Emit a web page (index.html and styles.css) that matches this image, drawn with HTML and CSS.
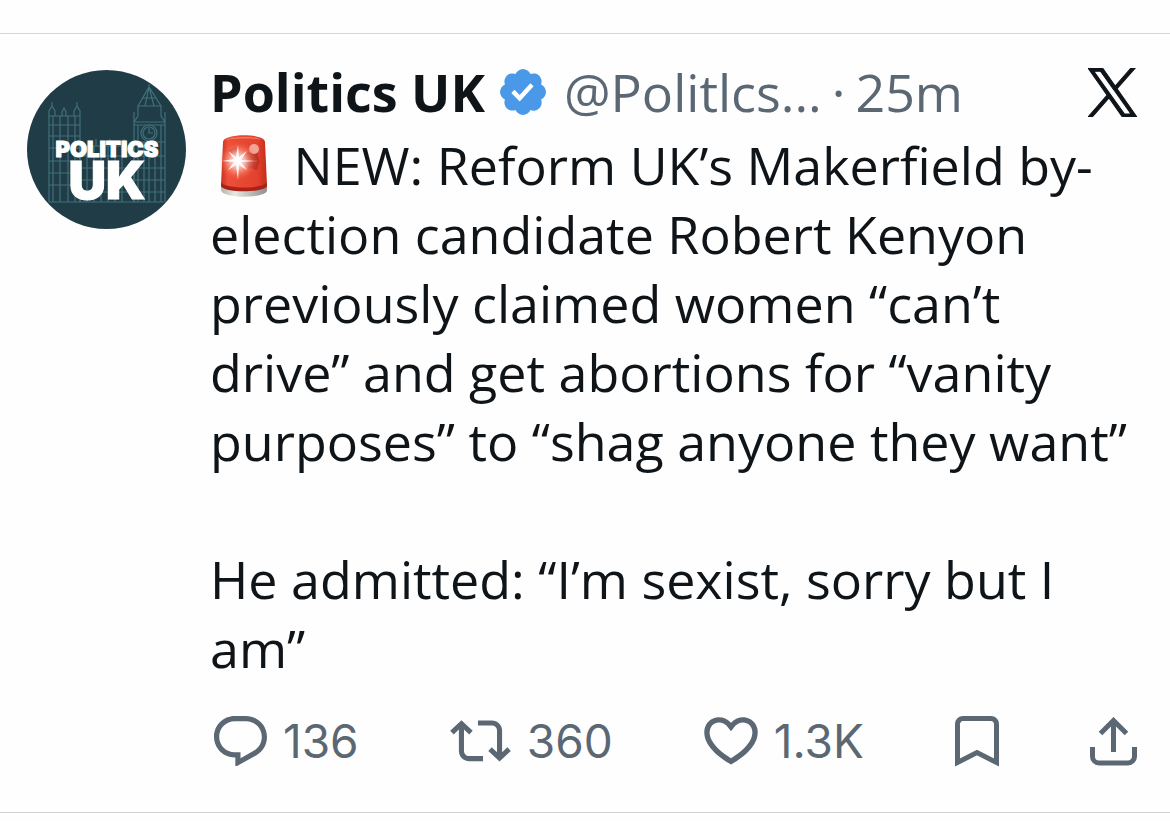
FILE: index.html
```html
<!DOCTYPE html>
<html lang="en">
<head>
    <meta charset="UTF-8">
    <meta name="viewport" content="width=device-width, initial-scale=1.0">
    <title>Politics UK on X</title>
    <link rel="stylesheet" href="styles.css">
</head>
<body>
    <article class="post">
        <a class="avatar" href="#" aria-label="Politics UK profile">
            <svg viewBox="0 0 159 159">
                <circle cx="79.5" cy="79.5" r="79.5" fill="#203d47"/>
                <g fill="none" stroke="#41707a" stroke-width="1.2">
                    <!-- west tower -->
                    <path d="M22 132V46h31v86M26 46v86M33 46v86M41 46v86M48 46v86M22 55h31M22 66h31M22 78h31M22 91h31M22 103h31M22 115h31M22 46v-5l3-5 3 5v5M47 46v-5l3-5 3 5v5M35 46v-4l2-4 2 4v4M25 36v-4M50 36v-4"/>
                    <!-- hall -->
                    <path d="M53 132V76h54v56M60 76v56M67 76v56M74 76v56M81 76v56M88 76v56M95 76v56M53 86h54M53 98h54M53 110h54M53 122h54M69 76v-7M83 76v-7M97 76v-7M22 132h115"/>
                    <!-- clock tower -->
                    <path d="M107 132V52h31v80M107 52l4-6V36h23v10l4 6M111 36l11-19 12 19M115 28h15M118 36l4-19 5 19M122 17v-3M107 42v10M138 42v10M107 55h31M107 72h31M111 55v77M134 55v77M117 72v60M122 72v60M128 72v60M107 86h31M107 98h31M107 110h31M107 122h31"/>
                    <circle cx="122" cy="63" r="8"/>
                    <circle cx="122" cy="63" r="6"/>
                    <path d="M122 58v5h4"/>
                </g>
                <text class="avatar-top" x="80" y="87">POLITICS</text>
                <text class="avatar-bottom" x="80" y="129">UK</text>
            </svg>
        </a>
        <div class="content">
            <header class="header">
                <a class="name" href="#">Politics UK</a>
                <svg class="verified" viewBox="1.6 1.6 18.8 18.8" role="img" aria-label="Verified account">
                    <path d="M20.396 11c-.018-.646-.215-1.275-.57-1.816-.354-.54-.852-.972-1.438-1.246.223-.607.27-1.264.14-1.897-.131-.634-.437-1.218-.882-1.687-.47-.445-1.053-.75-1.687-.882-.633-.13-1.29-.083-1.897.14-.273-.587-.704-1.086-1.245-1.44S11.647 1.62 11 1.604c-.646.017-1.273.213-1.813.568s-.969.854-1.24 1.44c-.608-.223-1.267-.272-1.902-.14-.635.13-1.22.436-1.69.882-.445.47-.749 1.055-.878 1.688-.13.633-.08 1.29.144 1.896-.587.274-1.087.705-1.443 1.245-.356.54-.555 1.17-.574 1.817.02.647.218 1.276.574 1.817.356.54.856.972 1.443 1.245-.224.606-.274 1.263-.144 1.896.13.634.433 1.218.877 1.688.47.443 1.054.747 1.687.878.633.132 1.29.084 1.897-.136.274.586.705 1.084 1.246 1.439.54.354 1.17.551 1.816.569.647-.016 1.276-.213 1.817-.567s.972-.854 1.245-1.44c.604.239 1.266.296 1.903.164.636-.132 1.22-.447 1.68-.907.46-.46.776-1.044.908-1.681s.075-1.299-.165-1.903c.586-.274 1.084-.705 1.439-1.246.354-.54.551-1.17.569-1.816zM9.662 14.85l-3.429-3.428 1.293-1.302 2.072 2.072 4.4-4.794 1.347 1.246z"/>
                </svg>
                <a class="handle" href="#">@Politlcs...</a>
                <span class="dot">·</span>
                <a class="time" href="#">25m</a>
                <a class="logo" href="#" aria-label="X">
                    <svg viewBox="0 0 24 24"><path d="M14.258 10.152L23.176 0h-2.113l-7.747 8.813L7.133 0H0l9.352 13.328L0 23.973h2.113l8.176-9.309 6.531 9.309h7.133zm-2.895 3.293l-.949-1.328L2.875 1.56h3.246l6.086 8.523.945 1.328 7.91 11.078h-3.246zm0 0"/></svg>
                </a>
            </header>
            <p class="text">
                <svg class="siren" viewBox="0 0 48 62" role="img" aria-label="Siren">
                    <defs>
                        <linearGradient id="glass" x1="0" x2="1" y1="0" y2="0">
                            <stop offset="0" stop-color="#c8301f"/>
                            <stop offset=".15" stop-color="#ee4f38"/>
                            <stop offset=".8" stop-color="#e2412c"/>
                            <stop offset="1" stop-color="#c22c1c"/>
                        </linearGradient>
                        <linearGradient id="base" x1="0" x2="1" y1="0" y2="0">
                            <stop offset="0" stop-color="#b5b3ae"/>
                            <stop offset=".3" stop-color="#e8e7e3"/>
                            <stop offset="1" stop-color="#8f8e8a"/>
                        </linearGradient>
                        <radialGradient id="glow">
                            <stop offset="0" stop-color="#fff"/>
                            <stop offset=".4" stop-color="#ffc9bd" stop-opacity=".8"/>
                            <stop offset="1" stop-color="#f0604a" stop-opacity="0"/>
                        </radialGradient>
                    </defs>
                    <path fill="url(#base)" d="M1 50c0-3 46-3 46 0v5c0 9-46 9-46 0z"/>
                    <path fill="url(#glass)" d="M3 7c0-9 42-9 42 0l2 43c-1 8-45 8-46 0z"/>
                    <path fill="#a92117" d="M1 48c8 6 38 6 46 0v3c-2 7-44 7-46 0z"/>
                    <path fill="#f47a60" d="M6 5c4-4 32-4 36 0-8-2-28-2-36 0z"/>
                    <path fill="#a52c22" d="M7 16l9-4 5 8-6 5zM24 18l13-2 3 12-11 6-4-8zM28 32l11-3-2 6z" opacity=".6"/>
                    <circle cx="34" cy="14" r="5" fill="#f3a398"/>
                    <circle cx="18" cy="26" r="19" fill="url(#glow)"/>
                    <path fill="#fff" d="M18 10l1 12 8-6-6 9 17 1-17 1 6 8-8-5-1 15-2-15-8 5 6-8-12-1 12-2-6-8 8 6z" opacity=".9"/>
                </svg>
                NEW: Reform UK’s Makerfield by-<br>
                election candidate Robert Kenyon<br>
                previously claimed women “can’t<br>
                drive” and get abortions for “vanity<br>
                purposes” to “shag anyone they want”
            </p>
            <p class="text">
                He admitted: “I’m sexist, sorry but I<br>
                am”
            </p>
            <footer class="actions">
                <button class="action" type="button" aria-label="Reply, 136">
                    <svg class="reply" viewBox="1.75 2 20.5 19.7"><path d="M1.751 10c0-4.42 3.584-8 8.005-8h4.366c4.49 0 8.129 3.64 8.129 8.13 0 2.96-1.607 5.68-4.196 7.11l-8.054 4.46v-3.69h-.067c-4.49.1-8.183-3.51-8.183-8.01zm8.005-6c-3.317 0-6.005 2.69-6.005 6 0 3.37 2.77 6.08 6.138 6.01l.351-.01h1.761v2.3l5.087-2.81c1.951-1.08 3.163-3.13 3.163-5.36 0-3.39-2.744-6.13-6.129-6.13H9.756z"/></svg>
                    <span>136</span>
                </button>
                <button class="action" type="button" aria-label="Repost, 360">
                    <svg class="repost" viewBox="0 3.8 24 16.4"><path d="M4.5 3.88l4.432 4.14-1.364 1.46L5.5 7.55V16c0 1.1.896 2 2 2H13v2H7.5c-2.209 0-4-1.79-4-4V7.55L1.432 9.48.068 8.02 4.5 3.88zM16.5 6H11V4h5.5c2.209 0 4 1.79 4 4v8.45l2.068-1.93 1.364 1.46-4.432 4.14-4.432-4.14 1.364-1.46 2.068 1.93V8c0-1.1-.896-2-2-2z"/></svg>
                    <span>360</span>
                </button>
                <button class="action" type="button" aria-label="Like, 1.3K">
                    <svg class="like" viewBox="1.9 3.4 20.2 17.8"><path d="M16.697 5.5c-1.222-.06-2.679.51-3.89 2.16l-.805 1.09-.806-1.09C9.984 6.01 8.526 5.44 7.304 5.5c-1.243.07-2.349.78-2.91 1.91-.552 1.12-.633 2.78.479 4.82 1.074 1.97 3.257 4.27 7.129 6.61 3.87-2.34 6.052-4.64 7.126-6.61 1.111-2.04 1.03-3.7.477-4.82-.561-1.13-1.666-1.84-2.908-1.91zm4.187 7.69c-1.351 2.48-4.001 5.12-8.379 7.67l-.503.3-.504-.3c-4.379-2.55-7.029-5.19-8.382-7.67-1.36-2.5-1.41-4.86-.514-6.67.887-1.79 2.647-2.91 4.601-3.01 1.651-.09 3.368.56 4.798 2.01 1.429-1.45 3.146-2.1 4.796-2.01 1.954.1 3.714 1.22 4.601 3.01.896 1.81.846 4.17-.514 6.67z"/></svg>
                    <span>1.3K</span>
                </button>
                <button class="action" type="button" aria-label="Bookmark">
                    <svg class="bookmark line" viewBox="0 0 44 51"><path d="M2.5 46.5V8A5.5 5.5 0 0 1 8 2.500h28A5.500 5.500 0 0 1 41.500 8v38.500L22 36.500z"/></svg>
                </button>
                <button class="action" type="button" aria-label="Share">
                    <svg class="share line" viewBox="0 0 47 49"><path d="M23.500 35V4M10.500 16.500l13-13 13 13M2.500 30v9.500a6.500 6.500 0 0 0 6.500 6.500h29a6.500 6.500 0 0 0 6.500-6.500V30"/></svg>
                </button>
            </footer>
        </div>
    </article>
</body>
</html>
```
FILE: styles.css
```css
body {
    font-family: "Open Sans", "Noto Sans", sans-serif;
    background-color: #fefefe;
    color: #0f1419;
    margin: 0;
    padding-top: 33px;
}

a {
    color: inherit;
    text-decoration: none;
}

svg {
    display: block;
    flex: none;
    fill: currentColor;
}

.post {
    display: flex;
    gap: 24px;
    padding: 24px 33px 45px 27px;
    border-top: 1px solid #d6d6d6;
    border-bottom: 1px solid #d0d3d5;
}

.avatar {
    flex: none;
    width: 159px;
    margin-top: 12px;
}

.avatar text {
    font-family: Inter, sans-serif;
    font-weight: 900;
    fill: white;
    stroke: white;
    stroke-width: 1px;
    text-anchor: middle;
}

.avatar-top {
    font-size: 22px;
}

.avatar-bottom {
    font-size: 52px;
}

.content {
    flex: 1;
    min-width: 0;
}

.header {
    display: flex;
    align-items: center;
    margin-bottom: 4px;
    font-size: 52px;
    line-height: 68px;
    white-space: nowrap;
}

.name {
    font-weight: bold;
}

.verified {
    width: 46px;
    margin: 0 18px 0 15px;
    color: #4a99e9;
}

.handle, .dot, .time {
    color: #5b6874;
}

.dot {
    margin: 0 10px;
}

.logo {
    width: 49px;
    margin-left: auto;
}

.logo path {
    stroke: currentColor;
    stroke-width: 0.5;
}

.text {
    margin: 0 0 69px;
    font-size: 52px;
    line-height: 69px;
    white-space: nowrap;
}

.text:last-of-type {
    margin-bottom: 33px;
}

.siren {
    display: inline-block;
    width: 48px;
    margin: 0 12px 0 10px;
    vertical-align: -12px;
}

.actions {
    display: flex;
    justify-content: space-between;
    align-items: center;
    padding-left: 4px;
}

.action {
    display: flex;
    align-items: center;
    gap: 16px;
    padding: 0;
    border: none;
    background: none;
    color: #5b6874;
    font-family: Inter, sans-serif;
    font-size: 46px;
    line-height: 52px;
    cursor: pointer;
}

.line {
    fill: none;
    stroke: currentColor;
    stroke-width: 5;
}

.reply {
    width: 53px;
}

.repost {
    width: 61px;
}

.like {
    width: 54px;
}

.bookmark {
    width: 44px;
}

.share {
    width: 47px;
}
```
